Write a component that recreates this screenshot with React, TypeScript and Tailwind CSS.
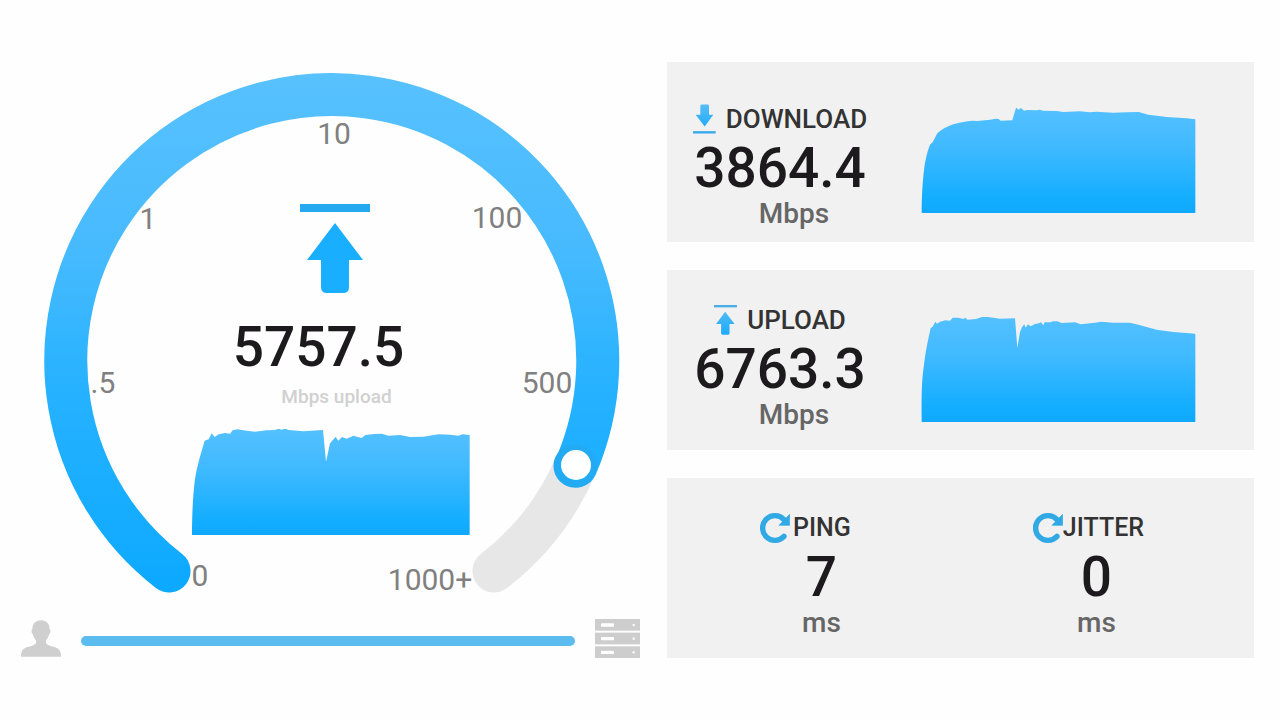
import React from 'react';

interface AreaChartProps {
  id: string;
  line: string;
  viewBox: string;
  className: string;
  label: string;
}

const AreaChart: React.FC<AreaChartProps> = ({ id, line, viewBox, className, label }) => (
  <svg viewBox={viewBox} className={className} preserveAspectRatio="none" role="img" aria-label={label}>
    <defs>
      <linearGradient id={id} x1="0" y1="0" x2="0" y2="1">
        <stop offset="0" stopColor="#54c0ff" />
        <stop offset="0.35" stopColor="#42baff" />
        <stop offset="0.85" stopColor="#14aeff" />
        <stop offset="1" stopColor="#0fa8fc" />
      </linearGradient>
    </defs>
    <path d={line} fill={`url(#${id})`} />
  </svg>
);

const DOWNLOAD_LINE =
  'M65 399 C65 350 68 300 73 262 C78 230 85 205 91 193 L98 187 L112 160 C124 148 142 139 160 133 C180 127 200 124 217 122 L232 123 L270 119 L288 116 L296 117 L302 122 L337 121 L347 86 L350 83 L355 89 L363 84 L372 92 L382 90 L410 91 L420 89 L428 92 L470 93 L490 96 L540 94 L570 97 L590 95 L640 98 L680 97 L716 96 L745 104 L800 111 L860 115 L886 118 L886 399 Z';

const UPLOAD_LINE =
  'M65 366 C64 300 65 235 72 195 C76 160 82 130 92 84 L98 80 L106 65 L111 71 L120 65 L136 61 L150 62 L158 53 L175 53 L190 57 L196 53 L202 59 L228 57 L246 51 L264 51 L300 56 L345 55 L352 144 L360 96 L366 82 L373 73 L377 83 L384 73 L392 79 L405 72 L417 70 L423 67 L430 76 L434 67 L452 67 L458 64 L472 64 L485 69 L525 67 L542 73 L585 68 L604 65 L640 68 L690 68 L715 74 L770 89 L820 96 L886 101 L886 366 Z';

const LIVE_LINE =
  'M36 360 C36 285 40 230 45 192 C50 155 63 115 74 77 L86 73 L95 55 L104 66 L116 58 L135 54 L150 56 L158 46 L172 43 L200 47 L225 50 L260 46 L285 45 L296 41 L304 44 L316 41 L326 45 L370 49 L429 45 L438 140 L450 85 L467 65 L475 77 L486 66 L500 71 L520 62 L545 69 L556 60 L582 57 L606 56 L625 62 L660 60 L690 66 L730 65 L775 58 L810 59 L835 62 L848 58 L869 60 L869 360 Z';

const DownloadIcon = () => (
  <svg viewBox="96 153 69 89" className="h-[30px] w-[23px] shrink-0" aria-hidden="true">
    <defs>
      <linearGradient id="down-fill" x1="0" y1="0" x2="0" y2="1">
        <stop offset="0" stopColor="#58bdf5" />
        <stop offset="1" stopColor="#22acfa" />
      </linearGradient>
    </defs>
    <path
      d="M122 154 H140 Q144 154 144 158 V185 H157 L131 220 L104 185 H118 V158 Q118 154 122 154 Z"
      fill="url(#down-fill)"
    />
    <rect x="96" y="234" width="68" height="7" fill="#36a9ea" />
  </svg>
);

const UploadIcon = () => (
  <svg viewBox="162 122 68 89" className="h-[30px] w-[23px] shrink-0" aria-hidden="true">
    <defs>
      <linearGradient id="up-fill" x1="0" y1="0" x2="0" y2="1">
        <stop offset="0" stopColor="#50b9f5" />
        <stop offset="1" stopColor="#1cabfb" />
      </linearGradient>
    </defs>
    <rect x="162" y="122" width="68" height="7" fill="#4aaee6" />
    <path
      d="M195 142 L223 178 H208 V206 Q208 210 204 210 H187 Q183 210 183 206 V178 H168 Z"
      fill="url(#up-fill)"
    />
  </svg>
);

const RepeatIcon = () => (
  <svg viewBox="0 0 90 90" className="size-[30px] shrink-0" aria-hidden="true">
    <path d="M72 70 A37 37 0 1 1 72 20" fill="none" stroke="#30a9e4" strokeWidth="16" strokeLinecap="round" />
    <path d="M89 4 V37 H57 Z" fill="#30a9e4" stroke="#30a9e4" strokeWidth="2" strokeLinejoin="round" />
  </svg>
);

const PersonIcon = () => (
  <svg viewBox="62 236 122 112" className="h-[37px] w-[40px] shrink-0" role="img" aria-label="Client">
    <path
      d="M123 236 C140 236 149 247 149 262 C153 265 153 275 148 279 C146 287 142 293 138 298 V306 C144 315 160 316 171 321 C180 325 184 333 184 348 H62 C62 333 66 325 75 321 C86 316 102 315 108 306 V298 C104 293 100 287 98 279 C93 275 93 265 97 262 C97 247 106 236 123 236 Z"
      fill="#cfcfcf"
    />
  </svg>
);

const ServerIcon = () => (
  <svg viewBox="0 0 135 117" className="h-[39px] w-[45px] shrink-0" role="img" aria-label="Server">
    {[0, 41, 82].map((y) => (
      <g key={y}>
        <rect y={y} width="135" height="35" fill="#cdcdcd" />
        <rect x="18" y={y + 13} width="39" height="10" rx="2" fill="#fff" />
        <circle cx="116" cy={y + 18} r="4" fill="#f4f4f4" />
      </g>
    ))}
  </svg>
);

const gaugeLabels = [
  { text: '0', x: 200, y: 586 },
  { text: '.5', x: 103, y: 393 },
  { text: '1', x: 148, y: 229 },
  { text: '10', x: 334, y: 144 },
  { text: '100', x: 497, y: 228 },
  { text: '500', x: 547, y: 393 },
  { text: '1000+', x: 430, y: 590 },
];

const Gauge: React.FC = () => (
  <div className="grid">
    <svg viewBox="0 62 667 541" className="col-start-1 row-start-1 w-full">
      <defs>
        <linearGradient id="gauge-fill" gradientUnits="userSpaceOnUse" x1="0" y1="74" x2="0" y2="592">
          <stop offset="0" stopColor="#58c1fe" />
          <stop offset="0.35" stopColor="#46bafe" />
          <stop offset="0.6" stopColor="#27b2ff" />
          <stop offset="1" stopColor="#0ca9ff" />
        </linearGradient>
      </defs>
      <g fill="none" strokeWidth="43" strokeLinecap="round">
        <path d="M576 465 A266 266 0 0 1 494 571" stroke="#e7e7e7" />
        <path d="M169 571 A266 266 0 1 1 576 466" stroke="url(#gauge-fill)" />
      </g>
      <circle cx="575" cy="466" r="18" fill="none" stroke="#22aaf2" strokeWidth="7" />
      <circle cx="576" cy="465" r="15" fill="#fff" />
      <g fill="#808080" fontSize="30" textAnchor="middle">
        {gaugeLabels.map((label) => (
          <text key={label.text} x={label.x} y={label.y}>
            {label.text}
          </text>
        ))}
      </g>
    </svg>
    <div className="col-start-1 row-start-1 flex flex-col items-center pt-[142px] pr-1.5">
      <svg viewBox="0 0 70 89" className="ml-2 h-[89px] w-[70px]" aria-hidden="true">
        <rect x="0" y="0" width="70" height="8" fill="#24a9f1" />
        <path d="M35 19 L63 56 H49 V83 Q49 89 43 89 H27 Q21 89 21 83 V56 H7 Z" fill="#1aaeff" />
      </svg>
      <p className="mt-[22px] mr-6 text-[55px] leading-[64px] font-medium text-[#1c1a1c]">5757.5</p>
      <p className="mt-1.5 ml-3 text-[19px] leading-6 font-medium text-[#d0d0d0]">Mbps upload</p>
      <AreaChart
        id="live-fill"
        line={LIVE_LINE}
        viewBox="36 42 834 318"
        className="mt-5 h-[106px] w-[278px]"
        label="Current upload speed"
      />
    </div>
  </div>
);

interface SpeedCardProps {
  title: string;
  value: string;
  icon: React.ReactNode;
  padding: string;
  children: React.ReactNode;
}

const SpeedCard: React.FC<SpeedCardProps> = ({ title, value, icon, padding, children }) => (
  <section className={`flex min-h-[180px] items-start justify-between bg-[#f1f1f1] pr-[58px] pl-6 ${padding}`}>
    <div className="flex w-[178px] flex-col items-center">
      <h2 className="flex items-center gap-2.5 text-[26px] leading-[30px] font-medium text-[#333]">
        {icon}
        {title}
      </h2>
      <p className="mt-1 text-[55px] leading-[60px] font-medium text-[#1c1a1c]">{value}</p>
      <p className="mt-0.5 ml-7 text-[28px] leading-7 font-medium text-[#666]">Mbps</p>
    </div>
    {children}
  </section>
);

interface LatencyStatProps {
  title: string;
  value: string;
  titleGap: string;
  valueOffset: string;
}

const LatencyStat: React.FC<LatencyStatProps> = ({ title, value, titleGap, valueOffset }) => (
  <div className="flex flex-col items-center">
    <h2 className={`flex items-center text-[25px] leading-[30px] font-medium text-[#333] ${titleGap}`}>
      <RepeatIcon />
      {title}
    </h2>
    <div className={`flex flex-col items-center ${valueOffset}`}>
      <p className="mt-1 text-[55px] leading-[60px] font-medium text-[#1c1a1c]">{value}</p>
      <p className="mt-0.5 text-[28px] leading-7 font-medium text-[#666]">ms</p>
    </div>
  </div>
);

const App: React.FC = () => {
  return (
    <main className="grid min-h-screen grid-cols-[667fr_587fr] items-start bg-[#fefefe] pt-[62px] pr-[26px] font-['Roboto',sans-serif]">
      <section>
        <Gauge />
        <div className="flex items-center pt-4 pr-[27px] pl-[21px]">
          <PersonIcon />
          <div className="mx-5 mt-1 h-[10px] flex-1 rounded-full bg-[#5cbcf0]" />
          <ServerIcon />
        </div>
      </section>

      <div className="flex flex-col gap-7">
        <SpeedCard title="DOWNLOAD" value="3864.4" icon={<DownloadIcon />} padding="pt-[42px]">
          <AreaChart
            id="download-fill"
            line={DOWNLOAD_LINE}
            viewBox="63 81 825 318"
            className="mt-[3px] h-[106px] w-[275px]"
            label="Download speed"
          />
        </SpeedCard>
        <SpeedCard title="UPLOAD" value="6763.3" icon={<UploadIcon />} padding="pt-[35px]">
          <AreaChart
            id="upload-fill"
            line={UPLOAD_LINE}
            viewBox="63 48 825 318"
            className="mt-[11px] h-[106px] w-[275px]"
            label="Upload speed"
          />
        </SpeedCard>
        <section className="flex min-h-[180px] justify-between bg-[#f1f1f1] pt-[35px] pr-[110px] pl-[93px]">
          <LatencyStat title="PING" value="7" titleGap="gap-[3px]" valueOffset="ml-8" />
          <LatencyStat title="JITTER" value="0" titleGap="gap-0" valueOffset="ml-4" />
        </section>
      </div>
    </main>
  );
};

export default App;
